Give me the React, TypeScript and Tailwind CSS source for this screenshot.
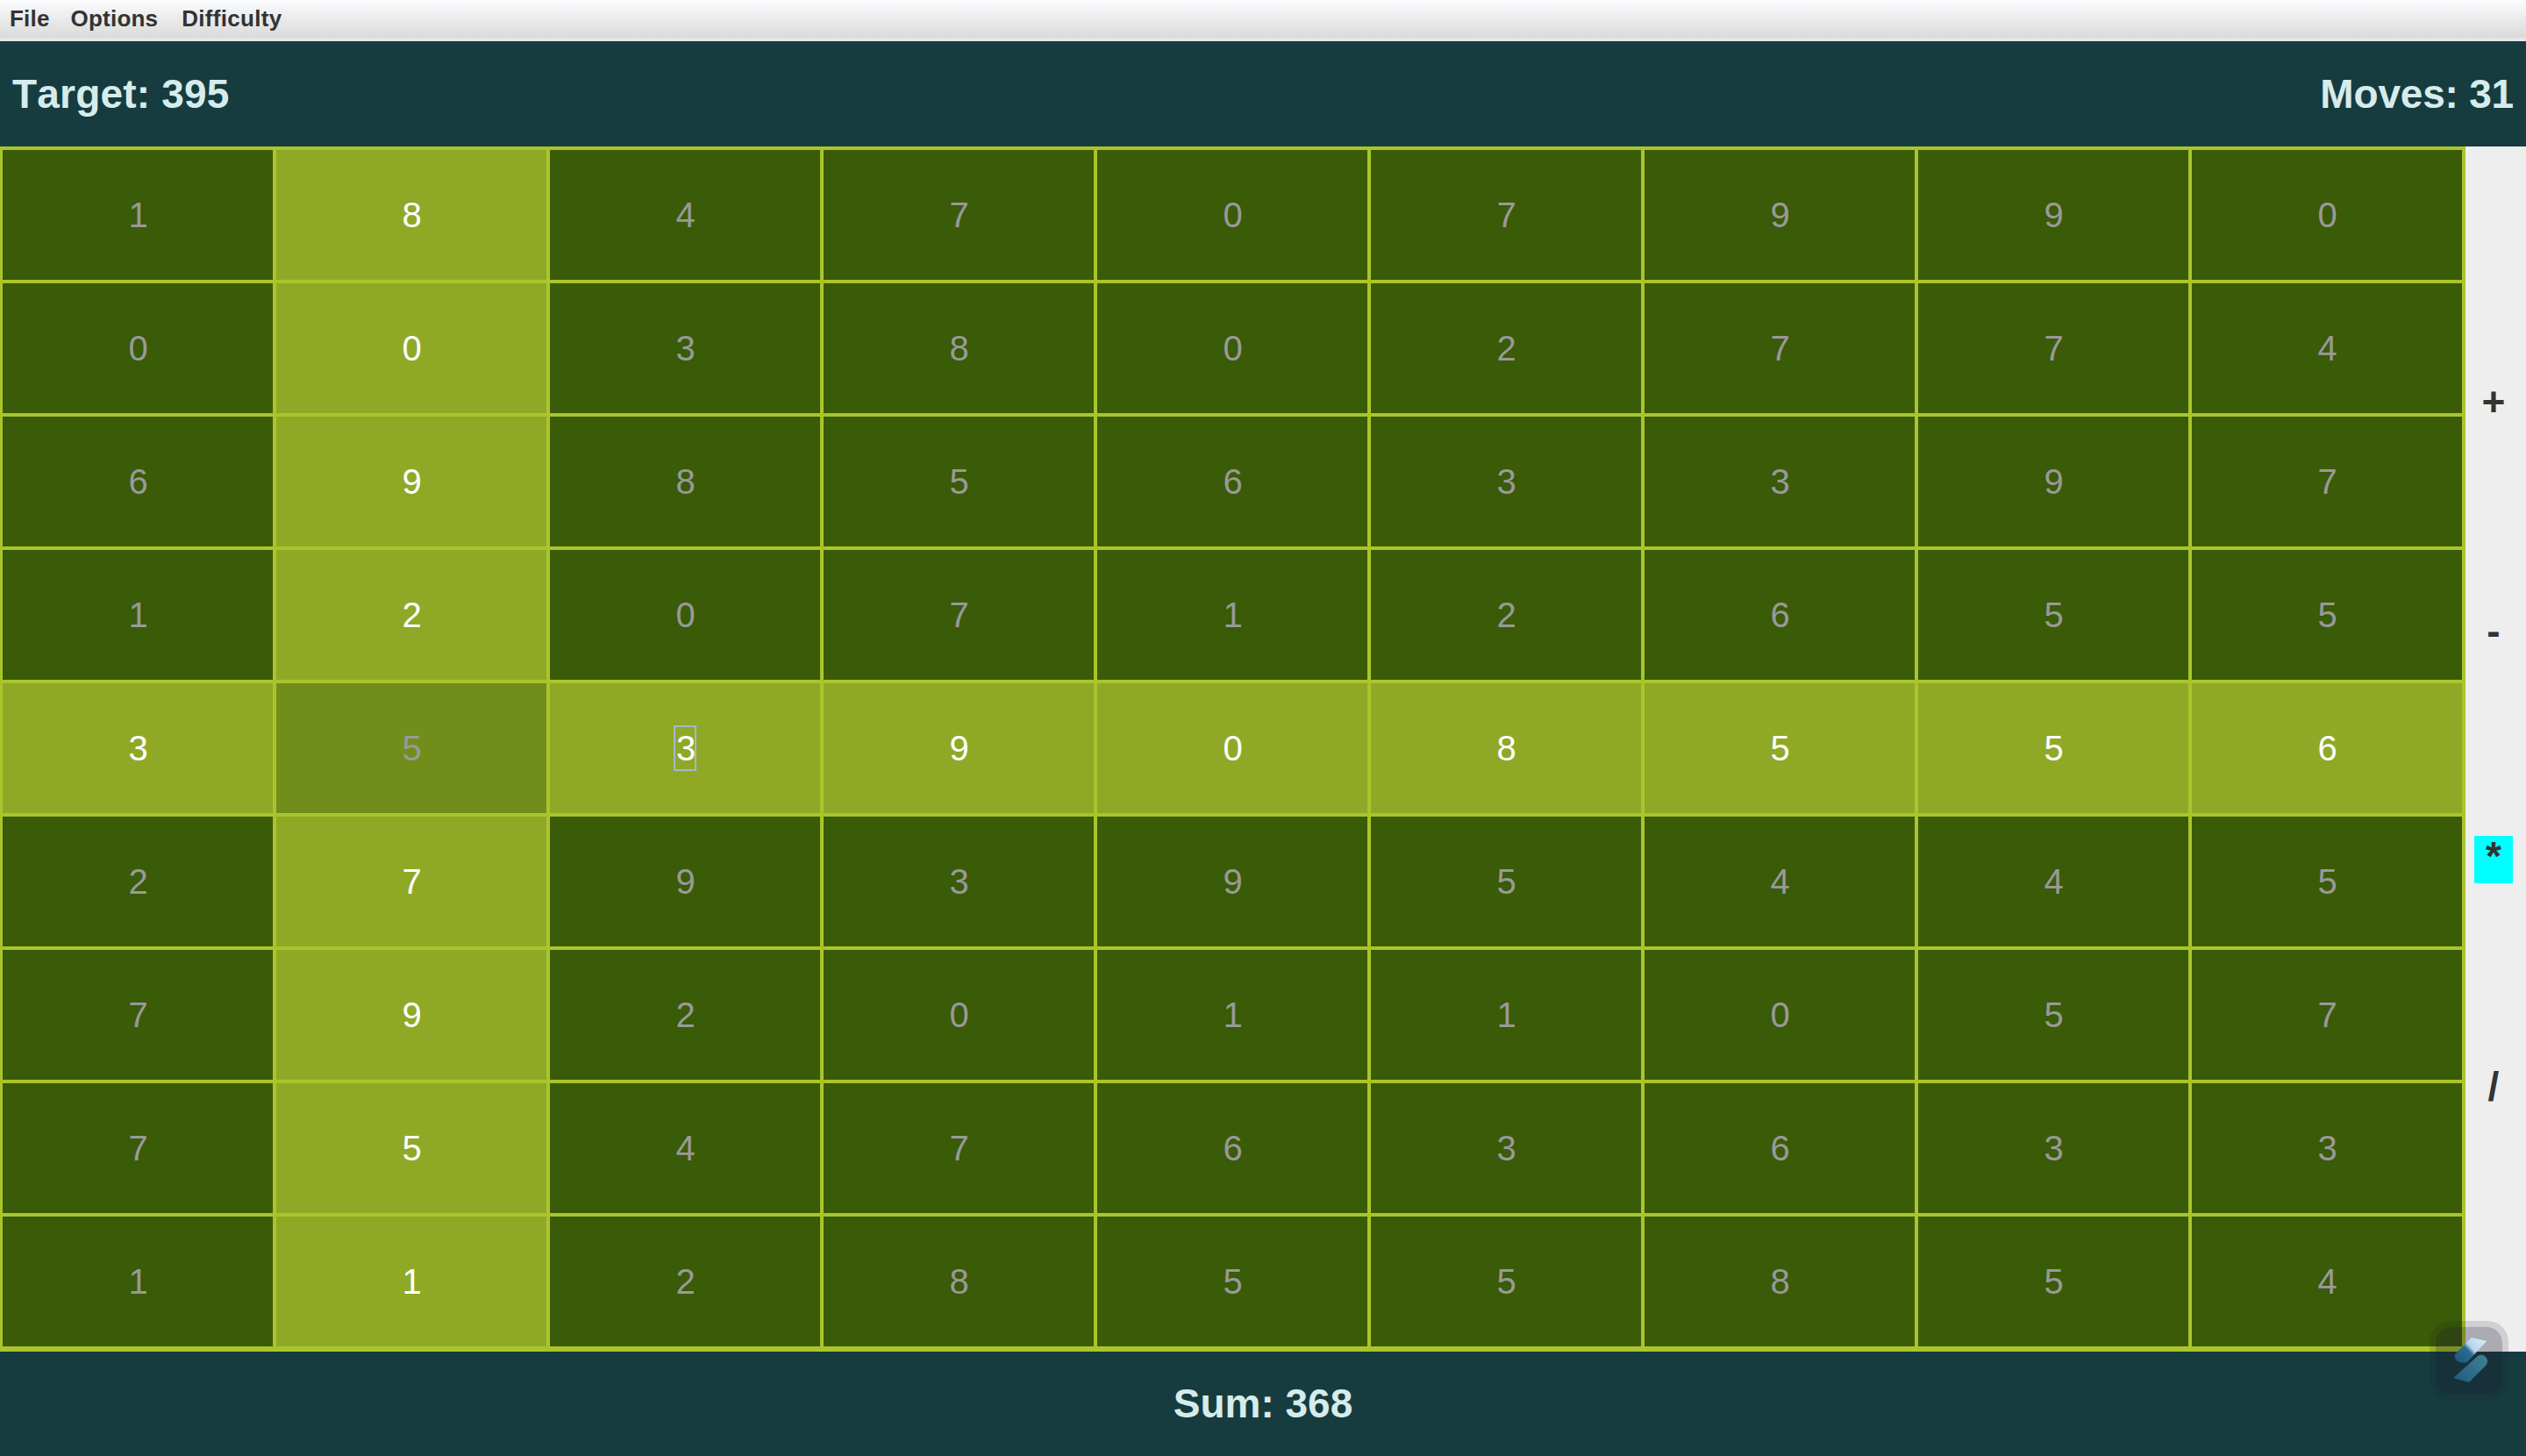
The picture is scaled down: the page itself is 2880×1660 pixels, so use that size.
const rows = [
  "184707990",
  "003802774",
  "698563397",
  "120712655",
  "353908556",
  "279395445",
  "792011057",
  "754763633",
  "112855854",
];

const ops = [
  { label: "+", cls: "mt-[264px] leading-[54px]" },
  { label: "-", cls: "mt-[207px] leading-[54px]" },
  { label: "*", cls: "mt-[207px] bg-[#00ffff] leading-[46px]" },
  { label: "/", cls: "mt-[205px] leading-[54px]" },
];

function Cell({ value, row, col }: { value: string; row: number; col: number }) {
  const isSelected = row === 4 && col === 1;
  const isLit = row === 4 || col === 1;
  const bg = isSelected ? "bg-[#718e1b]" : isLit ? "bg-[#8fa926]" : "bg-[#3a5b07]";
  const fg = isSelected ? "text-[#999999]" : isLit ? "text-white" : "text-[#999999]";
  const focused = row === 4 && col === 2;
  return (
    <div className={`flex items-center justify-center text-[40px] ${bg} ${fg}`}>
      {focused ? (
        <span className="box-content w-[22px] border-2 border-[#a3b8cc] text-center leading-[48px] [text-indent:1px]">
          {value}
        </span>
      ) : (
        <span className="pl-[1px]">{value}</span>
      )}
    </div>
  );
}

export default function App() {
  return (
    <div className="relative flex h-[1660px] w-[2880px] flex-col overflow-hidden bg-[#eeeeee] font-['Liberation_Sans',Arial,sans-serif] [font-kerning:none] [font-variant-ligatures:none]">
      <div className="h-[47px] border-b-[4px] border-[#e6e6e6] bg-gradient-to-b from-[#fbfcfe] to-[#dadada]">
        <div className="flex h-[43px] items-center pl-[11px] text-[26px] font-bold text-[#333333]">
          <span className="tracking-[0.2px]">File</span>
          <span className="ml-[24px] tracking-[0.2px]">Options</span>
          <span className="ml-[27px] tracking-[0.3px]">Difficulty</span>
        </div>
      </div>

      <div className="flex h-[120px] items-center justify-between bg-[#163c3f] px-[14px] text-[46px] font-bold text-[#d6ecec]">
        <span className="tracking-[0.2px]">Target: 395</span>
        <span className="tracking-[-0.2px]">Moves: 31</span>
      </div>

      <div className="flex h-[1374px]">
        <div className="grid w-[2811px] grid-cols-9 grid-rows-9 gap-[4px] bg-[#aac52b] pt-[4px] pr-[4px] pb-[6px] pl-[3px]">
          {rows.map((r, i) =>
            r.split("").map((v, j) => <Cell key={`${i}-${j}`} value={v} row={i} col={j} />),
          )}
        </div>
        <div className="flex w-[69px] flex-col bg-[#eeeeee] pl-[10px]">
          {ops.map((op) => (
            <div
              key={op.label}
              className={`h-[54px] w-[44px] shrink-0 text-center text-[46px] font-bold text-[#333333] ${op.cls}`}
            >
              {op.label}
            </div>
          ))}
        </div>
      </div>

      <div className="flex h-[119px] items-center justify-center bg-[#163c3f] text-[46px] font-bold text-[#d6ecec]">
        Sum: 368
      </div>

      <svg className="absolute left-[2770px] top-[1506px]" width="90" height="90" viewBox="0 0 90 90">
        <defs>
          <linearGradient id="topShape" x1="60" y1="20" x2="32" y2="46" gradientUnits="userSpaceOnUse">
            <stop offset="0" stopColor="#d8ebf8" />
            <stop offset="0.42" stopColor="#b4d4ea" />
            <stop offset="0.55" stopColor="#2a6d92" />
            <stop offset="1" stopColor="#1d5a80" />
          </linearGradient>
          <linearGradient id="bottomShape" x1="62" y1="42" x2="32" y2="68" gradientUnits="userSpaceOnUse">
            <stop offset="0" stopColor="#3f7f92" />
            <stop offset="1" stopColor="#1f5d80" />
          </linearGradient>
        </defs>
        <rect x="0" y="0" width="90" height="90" rx="24" fill="#1a1a2e" fillOpacity="0.14" />
        <rect x="7" y="7" width="76" height="76" rx="18" fill="#1a1a2e" fillOpacity="0.2" />
        <path d="M48 19 L65 23 L43 47 Q38 49 32 46 Q26 41 30 37 Z" fill="url(#topShape)" />
        <path d="M55 40 Q60 37 64 41 Q68 46 64 51 L45 70 L27 65 Z" fill="url(#bottomShape)" />
      </svg>
    </div>
  );
}
